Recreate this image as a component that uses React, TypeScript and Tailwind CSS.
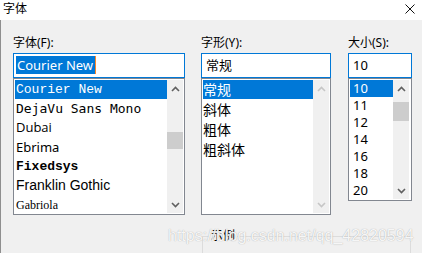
import React from 'react';

const cjk = "font-['Noto_Sans','Noto_Sans_CJK_SC',sans-serif]";

type Row = { label: string; h: string; cls: string };

const fontRows: Row[] = [
  { label: 'Courier New', h: 'h-[19px]', cls: "font-['Liberation_Mono',monospace] text-[13px]" },
  { label: 'DejaVu Sans Mono', h: 'h-[19px]', cls: "font-['DejaVu_Sans_Mono',monospace] text-[13px]" },
  { label: 'Dubai', h: 'h-[20px]', cls: "font-['Open_Sans',sans-serif] text-[13px]" },
  { label: 'Ebrima', h: 'h-[20px]', cls: "font-['Noto_Sans',sans-serif] text-[13px]" },
  { label: 'Fixedsys', h: 'h-[17px]', cls: "font-['Liberation_Mono',monospace] text-[13px] font-bold" },
  { label: 'Franklin Gothic', h: 'h-[20px]', cls: "font-['Liberation_Sans',sans-serif] text-[14px] font-medium" },
  { label: 'Gabriola', h: 'h-[19px]', cls: "font-['Liberation_Serif',serif] text-[12px]" },
];

const styleRows = ['常规', '斜体', '粗体', '粗斜体'];
const sizeRows = ['10', '11', '12', '14', '16', '18', '20'];

const Chevron = ({ down, light }: { down?: boolean; light?: boolean }) => (
  <svg width="9" height="6" viewBox="0 0 9 6" className={down ? 'rotate-180' : ''}>
    <polyline
      points="1,5 4.5,1.5 8,5"
      fill="none"
      stroke={light ? '#c6c6c6' : '#606060'}
      strokeWidth="1.6"
    />
  </svg>
);

const ScrollBar = ({ thumbTop, thumbH, light }: { thumbTop?: string; thumbH?: string; light?: boolean }) => (
  <div className="w-4 bg-[#f0f0f0] flex flex-col mt-px mb-px">
    <div className="h-[17px] flex items-center justify-center">
      <Chevron light={light} />
    </div>
    <div className="flex-1">
      {thumbTop && <div className={`bg-[#cdcdcd] ${thumbTop} ${thumbH}`} />}
    </div>
    <div className="h-[17px] flex items-center justify-center">
      <Chevron down light={light} />
    </div>
  </div>
);

export default function App() {
  return (
    <div className={`w-[422px] h-[253px] overflow-hidden bg-white relative text-black ${cjk}`}>
      {/* title bar */}
      <div className="h-5 flex items-start justify-between pl-[3px] pr-[7px] bg-white">
        <span className="text-[12px] leading-4 pt-px">字体</span>
        <svg width="10" height="10" viewBox="0 0 10 10" className="mt-1">
          <path d="M0.5 0.5 L9.5 9.5 M9.5 0.5 L0.5 9.5" stroke="#111" strokeWidth="1" />
        </svg>
      </div>

      {/* body */}
      <div className="h-[233px] bg-[#f0f0f0] border-l border-[#8f8f8f] pl-3 pt-[15px]">
        <div className="flex items-start">
          {/* font */}
          <div className="w-[172px] flex flex-col">
            <div className="text-[12px] leading-4 h-4 mb-[2px]">字体(F):</div>
            <div className="h-[25px] border border-[#0078d7] bg-white px-[2px] py-[2px] flex items-start">
              <span className="bg-[#0078d7] text-white text-[13px] leading-[18px] font-['Noto_Sans',sans-serif] pl-px pr-[2px]">
                Courier New
              </span>
              <span className="w-px h-[18px] bg-[#ff8828]" />
            </div>
            <div className="h-[137px] border border-[#828790] bg-white flex pr-px overflow-hidden">
              <div className="flex-1 pl-px pt-px flex flex-col">
                {fontRows.map((r, i) => (
                  <div
                    key={r.label}
                    className={`${r.h} shrink-0 flex items-center pl-px whitespace-nowrap ${r.cls} ${
                      i === 0 ? 'bg-[#0078d7] text-white' : ''
                    }`}
                  >
                    {r.label}
                  </div>
                ))}
              </div>
              <ScrollBar thumbTop="mt-[35px]" thumbH="h-[17px]" />
            </div>
          </div>

          {/* style */}
          <div className="ml-[16px] w-[130px] flex flex-col">
            <div className="text-[12px] leading-4 h-4 mb-[2px]">字形(Y):</div>
            <div className="h-[25px] border border-[#0078d7] bg-white pl-[4px] flex items-center text-[13px]">
              常规
            </div>
            <div className="h-[137px] border border-[#828790] bg-white flex pr-px overflow-hidden">
              <div className="flex-1 pl-px pt-px flex flex-col">
                {styleRows.map((s, i) => (
                  <div
                    key={s}
                    className={`${i === 0 ? 'h-[19px] bg-[#0078d7] text-white' : 'h-5'} shrink-0 flex items-center text-[14px]`}
                  >
                    {s}
                  </div>
                ))}
              </div>
              <ScrollBar light />
            </div>
          </div>

          {/* size */}
          <div className="ml-[17px] w-[64px] flex flex-col">
            <div className="text-[12px] leading-4 h-4 mb-[2px]">大小(S):</div>
            <div className="h-[25px] border border-[#0078d7] bg-white pl-[4px] flex items-center text-[13px]">
              10
            </div>
            <div className="h-[123px] border border-[#828790] bg-white flex pr-[2px] overflow-hidden">
              <div className="flex-1 pl-px pt-px flex flex-col">
                {sizeRows.map((s, i) => (
                  <div
                    key={s}
                    className={`h-[17px] shrink-0 flex items-center pl-[3px] text-[13px] ${
                      i === 0 ? 'bg-[#0078d7] text-white' : ''
                    }`}
                  >
                    {s}
                  </div>
                ))}
              </div>
              <ScrollBar thumbTop="mt-[5px]" thumbH="h-[19px]" />
            </div>
          </div>
        </div>

        {/* sample group */}
        <fieldset className="ml-[189px] mt-[13px] w-[209px] h-[40px] border border-[#dcdcdc] px-[6px]">
          <legend className="px-[2px] text-[12px] leading-4">示例</legend>
        </fieldset>
      </div>

      {/* watermark */}
      <div className="absolute left-[168px] top-[226px] text-[16px] leading-5 font-['Liberation_Sans',sans-serif] text-white/90 [text-shadow:0_0_1px_#9a9a9a] whitespace-nowrap">
        https://blog.csdn.net/qq_42820594
      </div>
    </div>
  );
}
